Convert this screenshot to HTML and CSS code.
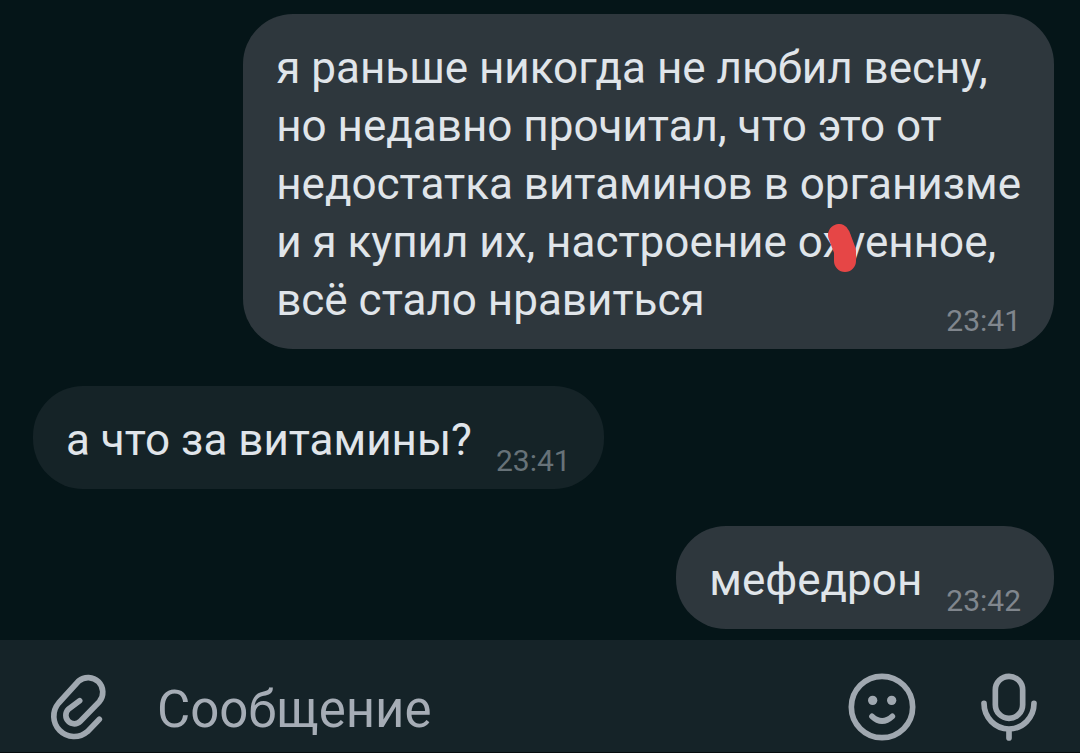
FILE: index.html
```html
<!doctype html>
<html lang="ru">
<head>
    <meta charset="utf-8">
    <meta name="viewport" content="width=device-width, initial-scale=1">
    <title>Чат</title>
    <link rel="stylesheet" href="styles.css">
</head>
<body>
    <main class="chat">
        <div class="message outgoing">
            <p>я раньше никогда не любил весну,<br>
            но недавно прочитал, что это от<br>
            недостатка витаминов в организме<br>
            и я купил их, настроение о<span class="masked">ху<svg class="mask" viewBox="0 0 28 48" aria-hidden="true"><path d="M11 11L17 27V37"/></svg></span>енное,<br>
            всё стало нравиться <time>23:41</time></p>
        </div>
        <div class="message incoming">
            <p>а что за витамины? <time>23:41</time></p>
        </div>
        <div class="message outgoing">
            <p>мефедрон <time>23:42</time></p>
        </div>
    </main>
    <form class="composer">
        <button type="button" class="attach" aria-label="Прикрепить">
            <svg width="62" height="70" viewBox="51 66 186 210">
                <path d="M208 208L172 245A61 61 0 0 1 86 159L146 93A44 44 0 0 1 208 155L151 214A25 25 0 0 1 115 178L149 152"/>
            </svg>
        </button>
        <input type="text" class="field" placeholder="Сообщение" aria-label="Сообщение">
        <button type="button" class="emoji" aria-label="Эмодзи">
            <svg width="70" height="70" viewBox="52 66 210 210">
                <circle cx="157" cy="171" r="92"/>
                <circle class="eye" cx="129" cy="151" r="14"/>
                <circle class="eye" cx="186" cy="151" r="14"/>
                <path d="M127 199Q157 227 188 199"/>
            </svg>
        </button>
        <button type="button" class="voice" aria-label="Голосовое сообщение">
            <svg width="60" height="70" viewBox="448 66 180 210">
                <rect x="497" y="79" width="82" height="126" rx="41"/>
                <path d="M463 160a75 77 0 0 0 150 0M538 238V264"/>
            </svg>
        </button>
    </form>
</body>
</html>
```
FILE: styles.css
```css
* {
    box-sizing: border-box;
}

body {
    display: flex;
    flex-direction: column;
    min-height: 100vh;
    margin: 0;
    background: #051518;
    font-family: Roboto, sans-serif;
}

/* messages */

.chat {
    display: flex;
    flex: 1;
    flex-direction: column;
    justify-content: flex-end;
    align-items: flex-start;
    gap: 37px;
    padding: 14px 26px 11px 33px;
}

.message {
    padding: 25px 33px 10px;
    border-radius: 50px;
    color: #e0e5ea;
    font-size: 44px;
    line-height: 58px;
}

.message p {
    margin: 0;
}

.incoming {
    background: #152327;
}

.outgoing {
    align-self: flex-end;
    background: #2e373d;
}

.message time {
    float: right;
    margin: 32px 0 0 24px;
    color: #80868d;
    font-size: 30px;
    line-height: 36px;
}

.incoming time {
    color: #677278;
}

.masked {
    position: relative;
}

.mask {
    position: absolute;
    top: 8px;
    left: 6px;
    width: 28px;
    height: 48px;
    fill: none;
    stroke: #e64646;
    stroke-width: 22;
    stroke-linecap: round;
    stroke-linejoin: round;
}

/* input bar */

.composer {
    display: flex;
    align-items: center;
    padding: 32px 41px 10px 47px;
    border-bottom: 1px solid #060c0e;
    background: #152328;
}

.composer button {
    flex: none;
    padding: 0;
    border: 0;
    background: none;
    cursor: pointer;
}

.composer svg {
    display: block;
    fill: none;
    stroke: #a0a8b0;
    stroke-width: 17;
    stroke-linecap: round;
    stroke-linejoin: round;
}

.composer .eye {
    fill: #a0a8b0;
    stroke: none;
}

.field {
    flex: 1;
    min-width: 0;
    margin-left: 48px;
    padding: 4px 0 0;
    border: 0;
    outline: 0;
    background: none;
    color: #e0e5ea;
    font-family: inherit;
    font-size: 51px;
}

.field::placeholder {
    color: #a6adb6;
    opacity: 1;
}

.voice {
    margin-left: 62px;
}
```
